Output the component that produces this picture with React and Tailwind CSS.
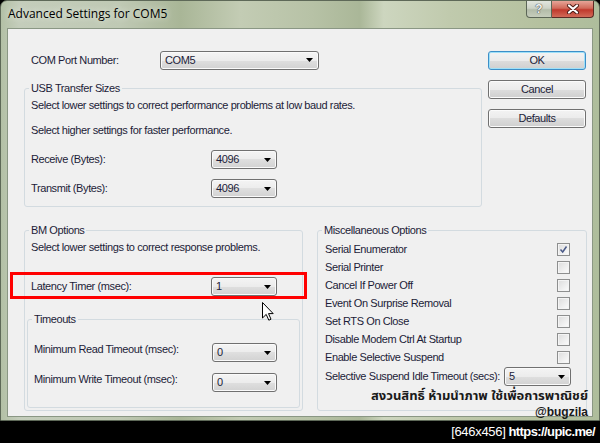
import React from "react";

const TXT = "text-[11px] leading-[13px] text-[#1c1c38] tracking-[-0.4px] whitespace-nowrap";

function Arrow() {
  return (
    <svg width="7" height="4" viewBox="0 0 7 4" className="shrink-0">
      <path d="M0 0 H7 L3.5 4 Z" fill="#000" />
    </svg>
  );
}

function Combo({ value, w }) {
  return (
    <div
      className={`${w} h-[19px] shrink-0 flex items-center justify-between pl-[4px] pr-[5px] rounded-[3px] border border-[#707070] bg-[linear-gradient(#f4f4f4,#ececec_50%,#dfdfdf_50%,#d2d2d2)] shadow-[inset_0_0_0_1px_#fafafa]`}
    >
      <span className={TXT}>{value}</span>
      <Arrow />
    </div>
  );
}

function Button({ label, focused }) {
  return (
    <div
      className={`h-[19px] w-[98px] flex items-center justify-center rounded-[3px] border bg-[linear-gradient(#f3f3f3,#ebebeb_50%,#dddddd_50%,#cfcfcf)] ${
        focused
          ? "border-[#3c8fc8] shadow-[inset_0_0_0_1px_#9fe0f8]"
          : "border-[#707070] shadow-[inset_0_0_0_1px_#fbfbfb]"
      }`}
    >
      <span className={TXT}>{label}</span>
    </div>
  );
}

function Check({ checked }) {
  return (
    <div className="w-[13px] h-[13px] border border-[#8e8f8f] bg-[linear-gradient(135deg,#dcdcdc,#fdfdfd)] shadow-[inset_0_0_0_1px_#f4f4f4] flex items-center justify-center">
      {checked && (
        <svg width="9" height="9" viewBox="0 0 9 9">
          <path d="M1.5 4.5 L3.7 7 L7.5 1.5" fill="none" stroke="#4a5a88" strokeWidth="1.5" />
        </svg>
      )}
    </div>
  );
}

function Legend({ children }) {
  return <legend className={`${TXT} ml-[4px] px-[2px]`}>{children}</legend>;
}

const GROUP = "border border-[#d3dbe0] rounded-[3px] min-w-0";

const misc = [
  ["Serial Enumerator", true],
  ["Serial Printer", false],
  ["Cancel If Power Off", false],
  ["Event On Surprise Removal", false],
  ["Set RTS On Close", false],
  ["Disable Modem Ctrl At Startup", false],
  ["Enable Selective Suspend", false],
];

export default function App() {
  return (
    <div className="relative w-[600px] h-[443px] bg-black overflow-hidden font-['Liberation_Sans',Arial,sans-serif]">
      {/* dialog window with glass frame */}
      <div className="h-[421px] flex flex-col rounded-t-[7px] border border-[#5e6958] bg-[linear-gradient(to_right,#b3c0a6_0%,#c4cdbb_3%,#bfc9b4_20%,#a9b697_30%,#c3ccb4_40%,#b7c2a6_52%,#aab798_60%,#cdd6bf_64%,#c0caad_75%,#b5c19f_90%,#aebd9c_100%)]">
        {/* title bar */}
        <div className="h-[27px] flex items-start">
          <div className="pl-[7px] pt-[5px] text-[12px] leading-[15px] text-black font-['Open_Sans',sans-serif] [text-shadow:0_0_6px_#eef2ea]">
            Advanced Settings for COM5
          </div>
          <div className="ml-auto mr-[5px] flex">
            <div className="w-[26px] h-[17px] rounded-bl-[4px] border border-t-0 border-[#5c6657] bg-[linear-gradient(#e2e6de,#cdd3c7_45%,#b3bca9_55%,#c6cdbc)] flex items-center justify-center">
              <span className="text-[12px] leading-[12px] font-bold text-[#f4f4f4] [text-shadow:0_0_1px_#333,0_0_1px_#333]">?</span>
            </div>
            <div className="w-[42px] h-[17px] rounded-br-[4px] border border-t-0 border-l-0 border-[#5a2a24] bg-[linear-gradient(#e6a598,#d06a5a_45%,#c0392c_55%,#d26a58)] flex items-center justify-center">
              <svg width="14" height="10" viewBox="0 0 14 10">
                <path d="M3 1.5 L11 8.5 M11 1.5 L3 8.5" stroke="#4a1a14" strokeWidth="4" strokeLinecap="round" />
                <path d="M3 1.5 L11 8.5 M11 1.5 L3 8.5" stroke="#fff" strokeWidth="2.2" strokeLinecap="round" />
              </svg>
            </div>
          </div>
        </div>

        {/* client area */}
        <div className="flex-1 px-[6px] pb-[3px]">
          <div className="h-full border border-[#8a9784] bg-[#f0f0f0] pt-[21px] pl-[16px]">
            <div className="flex items-start">
              <div className="w-[458px]">
                <div className="h-[20px] flex items-center">
                  <div className={`w-[136px] pl-[7px] ${TXT}`}>COM Port Number:</div>
                  <Combo value="COM5" w="w-[159px]" />
                </div>

                <fieldset className={`${GROUP} mt-[12px]`}>
                  <Legend>USB Transfer Sizes</Legend>
                  <div className="pl-[6px] pt-[4px] pb-[8px]">
                    <div className={TXT}>Select lower settings to correct performance problems at low baud rates.</div>
                    <div className={`${TXT} mt-[12px]`}>Select higher settings for faster performance.</div>
                    <div className="mt-[13px] flex items-center">
                      <div className={`w-[180px] ${TXT}`}>Receive (Bytes):</div>
                      <Combo value="4096" w="w-[66px]" />
                    </div>
                    <div className="mt-[10px] flex items-center">
                      <div className={`w-[180px] ${TXT}`}>Transmit (Bytes):</div>
                      <Combo value="4096" w="w-[66px]" />
                    </div>
                  </div>
                </fieldset>
              </div>

              <div className="ml-[6px] pt-[1px] flex flex-col gap-[10px]">
                <Button label="OK" focused />
                <Button label="Cancel" />
                <Button label="Defaults" />
              </div>
            </div>

            <div className="mt-[17px] flex items-start">
              <fieldset className={`${GROUP} w-[279px] h-[187px]`}>
                <Legend>BM Options</Legend>
                <div className="px-[2px] pt-[4px]">
                  <div className={`${TXT} pl-[4px]`}>Select lower settings to correct response problems.</div>
                  <div className="mt-[23px] pl-[4px] flex items-center">
                    <div className={`w-[180px] ${TXT}`}>Latency Timer (msec):</div>
                    <Combo value="1" w="w-[66px]" />
                  </div>
                  <fieldset className={`${GROUP} mt-[17px]`}>
                    <Legend>Timeouts</Legend>
                    <div className="pl-[6px] pt-[17px] pb-[15px]">
                      <div className="flex items-start">
                        <div className={`w-[178px] ${TXT}`}>Minimum Read Timeout (msec):</div>
                        <Combo value="0" w="w-[65px]" />
                      </div>
                      <div className="mt-[11px] flex items-start">
                        <div className={`w-[178px] ${TXT}`}>Minimum Write Timeout (msec):</div>
                        <Combo value="0" w="w-[65px]" />
                      </div>
                    </div>
                  </fieldset>
                </div>
              </fieldset>

              <fieldset className={`${GROUP} ml-[14px] w-[270px] h-[187px]`}>
                <Legend>Miscellaneous Options</Legend>
                <div className="pl-[7px] pt-[3px]">
                  {misc.map(([label, on]) => (
                    <div key={label} className="h-[18px] flex items-center">
                      <div className={`w-[232px] ${TXT}`}>{label}</div>
                      <Check checked={on} />
                    </div>
                  ))}
                  <div className="mt-[1px] flex items-center">
                    <div className={`w-[179px] ${TXT}`}>Selective Suspend Idle Timeout (secs):</div>
                    <Combo value="5" w="w-[67px]" />
                  </div>
                </div>
              </fieldset>
            </div>
          </div>
        </div>
      </div>

      {/* image host footer */}
      <div className="h-[22px] flex items-center justify-end pr-[5px] text-white text-[13px] leading-[16px]">
        <span className="tracking-[-0.3px]">[646x456]</span>
        <span className="ml-[3px] font-bold tracking-[-0.6px]">https://upic.me/</span>
      </div>

      {/* red highlight around latency row */}
      <div className="absolute left-[10px] top-[272px] w-[297px] h-[27px] border-[3px] border-[#ff0000]" />

      {/* mouse pointer */}
      <svg className="absolute left-[262px] top-[302px]" width="12" height="19" viewBox="0 0 12 19">
        <path d="M0.5 0.5 V16 L4.2 12.4 L6.8 18.2 L9 17.2 L6.5 11.6 H11.2 Z" fill="#fff" stroke="#000" strokeWidth="1" />
      </svg>

      {/* copyright stamp */}
      <div className="absolute right-[12px] top-[389px] flex flex-col items-end text-[#1a1a1a] font-bold">
        <div className="text-[13px] leading-[15px] font-['Noto_Sans_Thai','Noto_Sans','DejaVu_Sans',sans-serif]">สงวนสิทธิ์ ห้ามนำภาพ ใช้เพื่อการพาณิชย์</div>
        <div className="mt-[2px] text-[12px] leading-[13px]">@bugzila</div>
      </div>
    </div>
  );
}
